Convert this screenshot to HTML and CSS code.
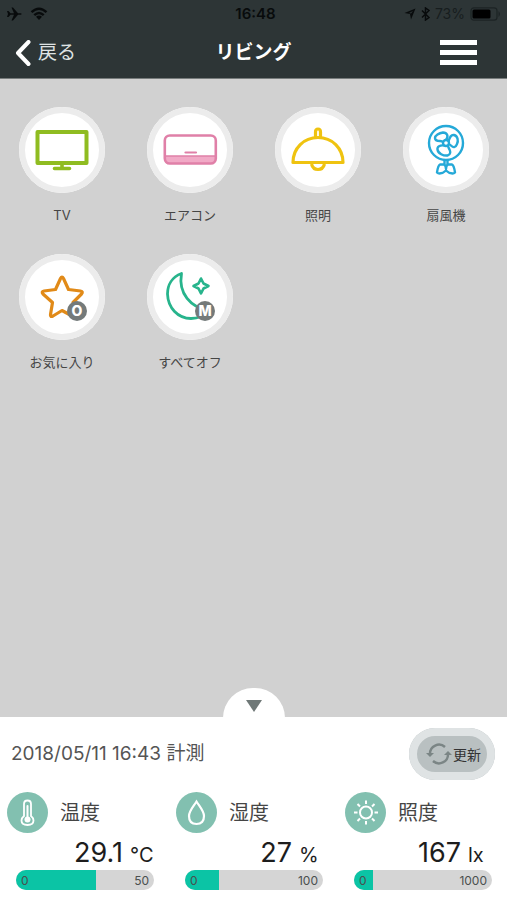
FILE: index.html
```html
<!DOCTYPE html>
<html lang="ja">
<head>
<meta charset="utf-8">
<meta name="viewport" content="width=device-width, initial-scale=1">
<title>リビング</title>
<link rel="stylesheet" href="styles.css">
</head>
<body>
<header class="header">
  <div class="status">
    <div class="status-left">
      <svg width="17" height="14" viewBox="0 0 17 14"><path d="M1 4h1.500l2 2.200h3.500L5.500.5H7l5 5.700h3q1.500.8 0 1.600h-3l-5 5.700H5.500L8 7.800H4.500l-2 2.200H1l1-3z"/></svg>
      <svg width="18" height="14" viewBox="0 0 18 14"><g fill="none" stroke="#080b0c" stroke-width="2.400"><path d="M1.500 5.200Q9-1.800 16.500 5.200M4.300 8.200Q9 3.800 13.700 8.200"/></g><path d="M6 9.800Q9 7.200 12 9.800L9 13z"/></svg>
    </div>
    <span class="clock">16:48</span>
    <div class="status-right">
      <svg width="12" height="12" viewBox="0 0 12 12"><path fill-rule="evenodd" d="M11.500.5L7 11.500 6 6 .5 5zM9 3L5 5l2 .5z"/></svg>
      <svg width="9" height="14" viewBox="0 0 9 14"><path d="M1 3.500l7 7L4.500 13V1L8 3.500l-7 7" fill="none" stroke="#080b0c" stroke-width="1.500"/></svg>
      <span class="percent">73%</span>
      <svg width="31" height="14" viewBox="0 0 31 14"><rect x="1" y=".8" width="26" height="12.400" rx="3" fill="none" stroke="#1c2324" stroke-width="1.200"/><rect x="2.500" y="2.500" width="18" height="9" rx="1.500" fill="#000"/><path d="M28.500 4q3 3 0 6z" fill="#1c2324"/></svg>
    </div>
  </div>
  <nav class="nav">
    <a class="back" href="#">
      <svg width="16" height="26" viewBox="0 0 16 26"><path d="M13.500 2L3 13l10.500 11" fill="none" stroke="#fff" stroke-width="4" stroke-linecap="round" stroke-linejoin="round"/></svg>
      <span>戻る</span>
    </a>
    <h1 class="title">リビング</h1>
    <button class="menu" type="button" aria-label="メニュー"><span></span><span></span><span></span></button>
  </nav>
</header>

<main class="devices">
  <button class="device" type="button">
    <span class="disc"><svg width="86" height="86" viewBox="0 0 86 86" fill="none" stroke="#8fbc21" stroke-linejoin="round" stroke-linecap="round"><rect x="18.500" y="25" width="49" height="31" stroke-width="4"/><path d="M43 57v4M35.500 61.500h15" stroke-width="3.600"/></svg></span>
    <span class="name">TV</span>
  </button>
  <button class="device" type="button">
    <span class="disc"><svg width="86" height="86" viewBox="0 0 86 86" fill="none" stroke="#e080a8" stroke-linecap="round"><path d="M18 49h50v4q0 4-4 4H22q-4 0-4-4z" fill="#f1a9c6" stroke="none"/><rect x="17.800" y="28.500" width="51" height="28" rx="5" stroke-width="2.600"/><path d="M19 49h49" stroke-width="1.500"/><path d="M38.500 45.500h10.500" stroke-width="2.200"/></svg></span>
    <span class="name">エアコン</span>
  </button>
  <button class="device" type="button">
    <span class="disc"><svg width="86" height="86" viewBox="0 0 86 86" fill="none" stroke="#efc310" stroke-width="3.200" stroke-linejoin="round"><path d="M40.500 31v-6q0-3 2.500-3t2.500 3v6"/><path d="M18 55.500C18 41 29 30.500 43 30.500s25 10.500 25 25z"/><path d="M36.500 57q1.500 5.500 6.500 5.500t6.500-5.500"/></svg></span>
    <span class="name">照明</span>
  </button>
  <button class="device" type="button">
    <span class="disc"><svg width="86" height="86" viewBox="0 0 86 86" fill="none" stroke="#25a9d8" stroke-width="2.400" stroke-linejoin="round"><circle cx="43" cy="36" r="17"/><circle cx="43" cy="36" r="3"/><path d="M43 33c3-4 1-7.500-3-7.500-4 .5-8 3-8 5.500s3 3 5 3 2.500.5 3.500 1.500"/><path d="M45.500 34.500c1-4 3-7 5.500-6.500 4 1 4.500 6 3 9-1.500 4-4 3.500-5.500 2s-2-2-3-1.500"/><path d="M41 38.500c-4-.5-7 1-6.500 4 .5 4 6 6.500 10 6 3.500-1 3-4 2-6s-1.500-2.500-1.500-4"/><path d="M41.500 53v4.500M44.500 53v4.500"/><path d="M37 57.500h4q2 1 2 4.500 0-3.500 2-4.500h4q2 1 3 8-1 1-2.500 1-3.500 0-6.500-3-3 3-6.500 3-1.500 0-2.500-1 1-7 3-8z"/></svg></span>
    <span class="name">扇風機</span>
  </button>
  <button class="device" type="button">
    <span class="disc"><svg width="86" height="86" viewBox="0 0 86 86" fill="none" stroke="#e18a18" stroke-width="3.200" stroke-linejoin="round"><path d="M41.500 24.500q1.500-3 3 0l5 11 12 1.500q3 .5 1 3L54 48.500l2.500 12q0 3-2.500 2L43 56.500 34 62q-3 1.500-2.500-1.500L33.500 48.500l-9.500-8.500q-2-2.500 1-3l11.500-1.500z"/></svg><span class="badge">O</span></span>
    <span class="name">お気に入り</span>
  </button>
  <button class="device" type="button">
    <span class="disc"><svg width="86" height="86" viewBox="0 0 86 86" fill="none" stroke="#27b48c" stroke-width="2.800" stroke-linejoin="round"><path d="M34.500 19.500C25 23 20.500 31 20.500 40 21 54 31 64.500 44 64.500c8 0 13-3 17-8C44 53 31 40 34.500 19.500z"/><path d="M54 24.500l2.500 5 5 2.500-5 2.500-2.500 5-2.500-5-5-2.500 5-2.500z" stroke-width="2.600"/></svg><span class="badge">M</span></span>
    <span class="name">すべてオフ</span>
  </button>
</main>

<section class="panel">
  <button class="handle" type="button" aria-label="閉じる"><svg width="16" height="12" viewBox="0 0 16 12"><path d="M0 0h16L8 12z" fill="#6f7877"/></svg></button>
  <div class="measured">
    <p class="date">2018/05/11 16:43 計測</p>
    <button class="refresh" type="button">
      <svg width="26" height="22" viewBox="0 0 26 22"><g fill="none" stroke="#7b8585" stroke-width="2.400"><path d="M4 11a9 9 0 0 1 15-7M22 11a9 9 0 0 1-15 7"/></g><path d="M0 10h8l-4 4zM18 12h8l-4-4z" fill="#7b8585"/></svg>
      <span>更新</span>
    </button>
  </div>
  <div class="sensors">
    <div class="sensor">
      <div class="kind">
        <svg width="41" height="41" viewBox="0 0 41 41"><circle cx="20.500" cy="20.500" r="20.500" fill="#82c0b0"/><g fill="none" stroke="#fff" stroke-width="1.800"><path d="M17 24V12q0-3.500 3.500-3.500T24 12v12q2.500 2 2.500 4.500 0 4.500-6 4.500t-6-4.500Q14.500 26 17 24z"/><path d="M20.500 14v11" stroke-width="2" stroke-linecap="round"/></g><circle cx="20.500" cy="27.500" r="3" fill="#fff"/></svg>
        <h2>温度</h2>
      </div>
      <p class="reading"><span class="value">29.1</span><span class="unit">°C</span></p>
      <div class="bar" role="meter" aria-label="温度" aria-valuemin="0" aria-valuemax="50" aria-valuenow="29.1"><div class="fill" style="width:58.2%"></div><span>0</span><span>50</span></div>
    </div>
    <div class="sensor">
      <div class="kind">
        <svg width="41" height="41" viewBox="0 0 41 41"><circle cx="20.500" cy="20.500" r="20.500" fill="#82c0b0"/><path d="M20.500 9.500C17 15 13 19 13 24q0 8 7.500 8t7.500-8c0-5-4-9-7.500-14.500z" fill="none" stroke="#fff" stroke-width="2.200"/></svg>
        <h2>湿度</h2>
      </div>
      <p class="reading"><span class="value">27</span><span class="unit">%</span></p>
      <div class="bar" role="meter" aria-label="湿度" aria-valuemin="0" aria-valuemax="100" aria-valuenow="27"><div class="fill" style="width:24.500%"></div><span>0</span><span>100</span></div>
    </div>
    <div class="sensor">
      <div class="kind">
        <svg width="41" height="41" viewBox="0 0 41 41"><circle cx="20.500" cy="20.500" r="20.500" fill="#82c0b0"/><g fill="none" stroke="#fff" stroke-width="2"><circle cx="21" cy="20.500" r="6"/><path d="M21 8.500v3.500M21 29v3.500M9 20.500h3.500M29.500 20.500H33M12.500 12l2.500 2.500M27 26.500l2.500 2.500M12.500 29l2.500-2.500M27 14.500l2.500-2.500"/></g></svg>
        <h2>照度</h2>
      </div>
      <p class="reading"><span class="value">167</span><span class="unit">lx</span></p>
      <div class="bar" role="meter" aria-label="照度" aria-valuemin="0" aria-valuemax="1000" aria-valuenow="167"><div class="fill" style="width:14%"></div><span>0</span><span>1000</span></div>
    </div>
  </div>
</section>
</body>
</html>
```
FILE: styles.css
```css
* { box-sizing: border-box; }
body {
  margin: 0;
  min-height: 100vh;
  display: flex;
  flex-direction: column;
  background: #d1d1d1;
  color: #454545;
  font-family: Inter, "Noto Sans CJK JP", sans-serif;
}
h1, h2, p { margin: 0; font-weight: 400; }
button {
  border: 0;
  padding: 0;
  background: none;
  color: inherit;
  font: inherit;
}
svg { display: block; flex: none; }

.header { background: #2d3536; border-bottom: 1px solid #777c7c; }
.status {
  display: grid;
  grid-template-columns: 1fr auto 1fr;
  align-items: center;
  height: 27px;
  padding: 0 6px;
  color: #080b0c;
}
.status svg { fill: #080b0c; }
.status-left, .status-right { display: flex; align-items: center; gap: 7px; }
.status-right { justify-content: flex-end; gap: 5px; }
.clock { padding-left: 4px; font-weight: 600; font-size: 15px; }
.percent { color: #171d1e; font-size: 14px; }
.nav {
  display: grid;
  grid-template-columns: 1fr auto 1fr;
  align-items: center;
  height: 51px;
  padding: 0 30px 0 15px;
  color: #fff;
}
.back {
  display: flex;
  align-items: center;
  gap: 7px;
  color: #dfe3e3;
  font-size: 19px;
  line-height: 28px;
  text-decoration: none;
}
.title { padding-left: 15px; font-size: 19px; font-weight: 700; line-height: 28px; }
.menu { display: grid; gap: 5px; justify-self: end; width: 37px; }
.menu span { height: 5px; background: #fff; }

.devices {
  flex: 1;
  display: grid;
  grid-template-columns: repeat(4, 86px);
  justify-content: space-between;
  align-content: start;
  row-gap: 27px;
  padding: 28px 18px 0 19px;
}
.device { display: grid; justify-items: center; gap: 12px; height: 120px; align-content: start; }
.disc {
  position: relative;
  width: 86px;
  height: 86px;
  border-radius: 50%;
  background: #fff;
  box-shadow: inset 0 0 0 6px #ececec;
}
.name { font-size: 13px; line-height: 20px; white-space: nowrap; }
.badge {
  position: absolute;
  right: 18px;
  bottom: 19px;
  width: 20px;
  height: 20px;
  border-radius: 50%;
  background: #747a7a;
  color: #fff;
  font-size: 14px;
  font-weight: 800;
  line-height: 20px;
  text-align: center;
}

.panel { position: relative; padding: 11px 0 10px; background: #fff; }
.handle {
  position: absolute;
  top: -29px;
  left: 50%;
  width: 62px;
  height: 30px;
  margin-left: -31px;
  border-radius: 31px 31px 0 0;
  background: #fff;
}
.handle svg { margin: 5px auto 0; }
.measured {
  display: flex;
  align-items: center;
  justify-content: space-between;
  padding: 0 12px 0 11px;
}
.date { font-size: 19px; line-height: 26px; color: #555; }
.refresh {
  display: flex;
  align-items: center;
  gap: 1px;
  height: 52px;
  padding: 0 14px 0 17px;
  border-radius: 26px;
  background: #b9c0c1;
  box-shadow: inset 0 0 0 8px #dfe3e4;
  color: #333;
  font-size: 14px;
}
.sensors { display: grid; grid-template-columns: repeat(3, 1fr); padding-top: 12px; }
.kind { display: flex; align-items: center; gap: 12px; padding-left: 7px; }
.kind h2 { font-size: 20px; line-height: 30px; }
.reading {
  display: grid;
  grid-template-columns: 1fr 32px;
  column-gap: 7px;
  align-items: baseline;
  height: 37px;
  padding-right: 7px;
  color: #1d1d1d;
}
.value { font-size: 27px; line-height: 40px; text-align: right; }
.unit { font-size: 20px; }
.bar {
  position: relative;
  display: flex;
  align-items: center;
  justify-content: space-between;
  height: 20px;
  margin: 0 15px 0 16px;
  padding: 0 5px;
  overflow: hidden;
  border-radius: 10px;
  background: #d5d5d5;
  color: #4a4f4e;
  font-size: 12px;
}
.bar span { position: relative; }
.bar .fill { position: absolute; inset: 0 auto 0 0; background: #0bc4a5; }
```
